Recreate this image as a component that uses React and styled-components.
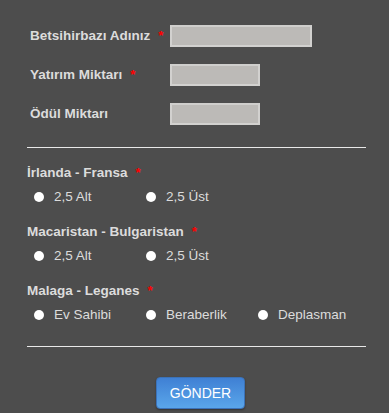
import React from "react";
import styled, { createGlobalStyle } from "styled-components";

const Global = createGlobalStyle`
  html, body { margin: 0; padding: 0; background: #4d4d4d; }
  body { font-family: "Liberation Sans", Arial, sans-serif; }
`;

const Page = styled.form`
  width: 389px;
  height: 413px;
  background: #4d4d4d;
  box-sizing: border-box;
  padding: 25px 23px 0 27px;
  color: #dedede;
  overflow: hidden;
`;

const FieldGrid = styled.div`
  display: grid;
  grid-template-columns: 140px auto;
  row-gap: 17px;
  padding-left: 3px;
  align-items: center;
`;

const Label = styled.label`
  font-size: 13.5px;
  font-weight: bold;
  color: #dcdcdc;
  line-height: 16px;
`;

const Star = styled.span`
  color: #ff0000;
  font-weight: bold;
  margin-left: ${(p) => p.$gap || 8}px;
`;

const Input = styled.input`
  box-sizing: border-box;
  width: ${(p) => p.$w}px;
  height: 22px;
  margin: 0;
  padding: 0 4px;
  background: #bcbab7;
  border: 2px solid #d2d1cf;
  border-top-color: #cfcecc;
  outline: none;
`;

const Rule = styled.hr`
  margin: ${(p) => p.$m};
  border: 0;
  height: 1px;
  background: #e8e8e8;
`;

const Group = styled.div`
  margin-bottom: ${(p) => p.$mb}px;
`;

const GroupTitle = styled.div`
  font-size: 13.5px;
  font-weight: bold;
  color: #dcdcdc;
  line-height: 16px;
`;

const Options = styled.div`
  display: flex;
  margin-top: 8px;
  padding-left: 7px;
`;

const Option = styled.label`
  display: flex;
  align-items: center;
  flex: none;
  width: 112px;
  font-size: 13.5px;
  color: #dcdcdc;
  line-height: 16px;
  &:last-child { width: auto; }
`;

const Dot = styled.span`
  width: 10px;
  height: 10px;
  border-radius: 50%;
  background: #ffffff;
  margin-right: 10px;
  flex: none;
`;

const ButtonRow = styled.div`
  display: flex;
  justify-content: center;
  padding-left: 8px;
`;

const Button = styled.button`
  width: 89px;
  height: 32px;
  border: 1px solid #3b72b8;
  border-radius: 4px;
  background: linear-gradient(#3f80d4, #5aa6ea);
  color: #ffffff;
  font-family: "Liberation Sans", Arial, sans-serif;
  font-size: 14px;
  padding: 0;
  box-shadow: 0 1px 2px rgba(0,0,0,0.35);
`;

const groups = [
  { title: "İrlanda - Fransa", opts: ["2,5 Alt", "2,5 Üst"], mb: 19 },
  { title: "Macaristan - Bulgaristan", opts: ["2,5 Alt", "2,5 Üst"], mb: 19 },
  { title: "Malaga - Leganes", opts: ["Ev Sahibi", "Beraberlik", "Deplasman"], mb: 0 },
];

export default function App() {
  return (
    <>
      <Global />
      <Page onSubmit={(e) => e.preventDefault()}>
        <FieldGrid>
          <Label>Betsihirbazı Adınız<Star>*</Star></Label>
          <Input $w={142} />
          <Label>Yatırım Miktarı<Star>*</Star></Label>
          <Input $w={90} />
          <Label>Ödül Miktarı</Label>
          <Input $w={90} />
        </FieldGrid>
        <Rule $m="22px 0 17px 0" />
        {groups.map((g) => (
          <Group key={g.title} $mb={g.mb}>
            <GroupTitle>{g.title}<Star>*</Star></GroupTitle>
            <Options>
              {g.opts.map((o) => (
                <Option key={o}><Dot />{o}</Option>
              ))}
            </Options>
          </Group>
        ))}
        <Rule $m="23px 0 30px 0" />
        <ButtonRow>
          <Button type="submit">GÖNDER</Button>
        </ButtonRow>
      </Page>
    </>
  );
}
